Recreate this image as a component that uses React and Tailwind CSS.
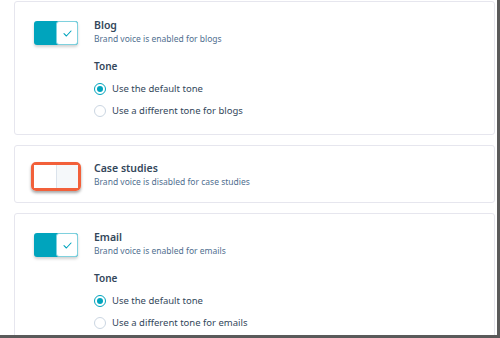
import React from "react";

const font = { fontFamily: '"Noto Sans", "Open Sans", sans-serif' };

function Toggle({ on }) {
  if (on) {
    return (
      <div className="flex h-[24px] w-[44px] shrink-0 rounded-[3px] bg-[#00a4bd] shadow-[0_2px_3px_rgba(0,0,0,0.18)]">
        <div className="ml-auto flex h-[24px] w-[22px] items-center justify-center rounded-[3px] border border-[#7fd1de] bg-white">
          <svg width="9" height="7" viewBox="0 0 9 7" fill="none">
            <path d="M1 3.6 L3.4 6 L8 1" stroke="#00a4bd" strokeWidth="1.1" strokeLinecap="round" strokeLinejoin="round" />
          </svg>
        </div>
      </div>
    );
  }
  return (
    <div className="flex h-[29px] w-[50px] shrink-0 rounded-[5px] border-[3px] border-[#f2603a] shadow-[0_2px_3px_rgba(0,0,0,0.35)]">
      <div className="flex-1 bg-white"></div>
      <div className="flex-1 border-l border-[#dbe3ec] bg-[#f5f8fa]"></div>
    </div>
  );
}

function Radio({ checked, label }) {
  return (
    <div className="flex h-[22px] items-center gap-[6px]">
      {checked ? (
        <div className="flex h-[12px] w-[12px] items-center justify-center rounded-full border-[1.5px] border-[#00a4bd] bg-white">
          <div className="h-[6px] w-[6px] rounded-full bg-[#00a4bd]"></div>
        </div>
      ) : (
        <div className="h-[12px] w-[12px] rounded-full border border-[#cbd6e2] bg-white"></div>
      )}
      <span className="text-[9.5px] text-[#33475b]">{label}</span>
    </div>
  );
}

function Card({ on, title, subtitle, tone, className }) {
  return (
    <div className={"rounded-[3px] border border-[#e6e6ee] bg-white " + className}>
      <div className="flex pl-[19px]">
        <div className={on ? "pt-[19px]" : "pt-[16px] -ml-[3px]"}>
          <Toggle on={on} />
        </div>
        <div className={(on ? "ml-[16px] pt-[16px]" : "ml-[13px] pt-[15px]")}>
          <div className="text-[10.5px] font-semibold leading-[15px] text-[#33475b]">{title}</div>
          <div className="text-[8.5px] leading-[12px] text-[#516f90]">{subtitle}</div>
          {tone && (
            <div className="pt-[13px]">
              <div className="text-[10px] font-semibold leading-[16px] text-[#33475b]">Tone</div>
              <div className="pt-[4px]">
                <Radio checked label="Use the default tone" />
                <Radio label={tone} />
              </div>
            </div>
          )}
        </div>
      </div>
    </div>
  );
}

export default function App() {
  return (
    <div className="h-[338px] w-[500px] overflow-hidden bg-white" style={font}>
      <div className="h-[338px] w-[500px] overflow-hidden border-b-[3px] border-r-[3px] border-[#5a5a5a] bg-white">
        <div className="ml-[14px] w-[481px] pt-[1px]">
          <Card on title="Blog" subtitle="Brand voice is enabled for blogs" tone="Use a different tone for blogs" className="h-[134px]" />
          <Card title="Case studies" subtitle="Brand voice is disabled for case studies" className="mt-[10px] h-[58px]" />
          <Card on title="Email" subtitle="Brand voice is enabled for emails" tone="Use a different tone for emails" className="mt-[10px] h-[140px]" />
        </div>
      </div>
    </div>
  );
}
